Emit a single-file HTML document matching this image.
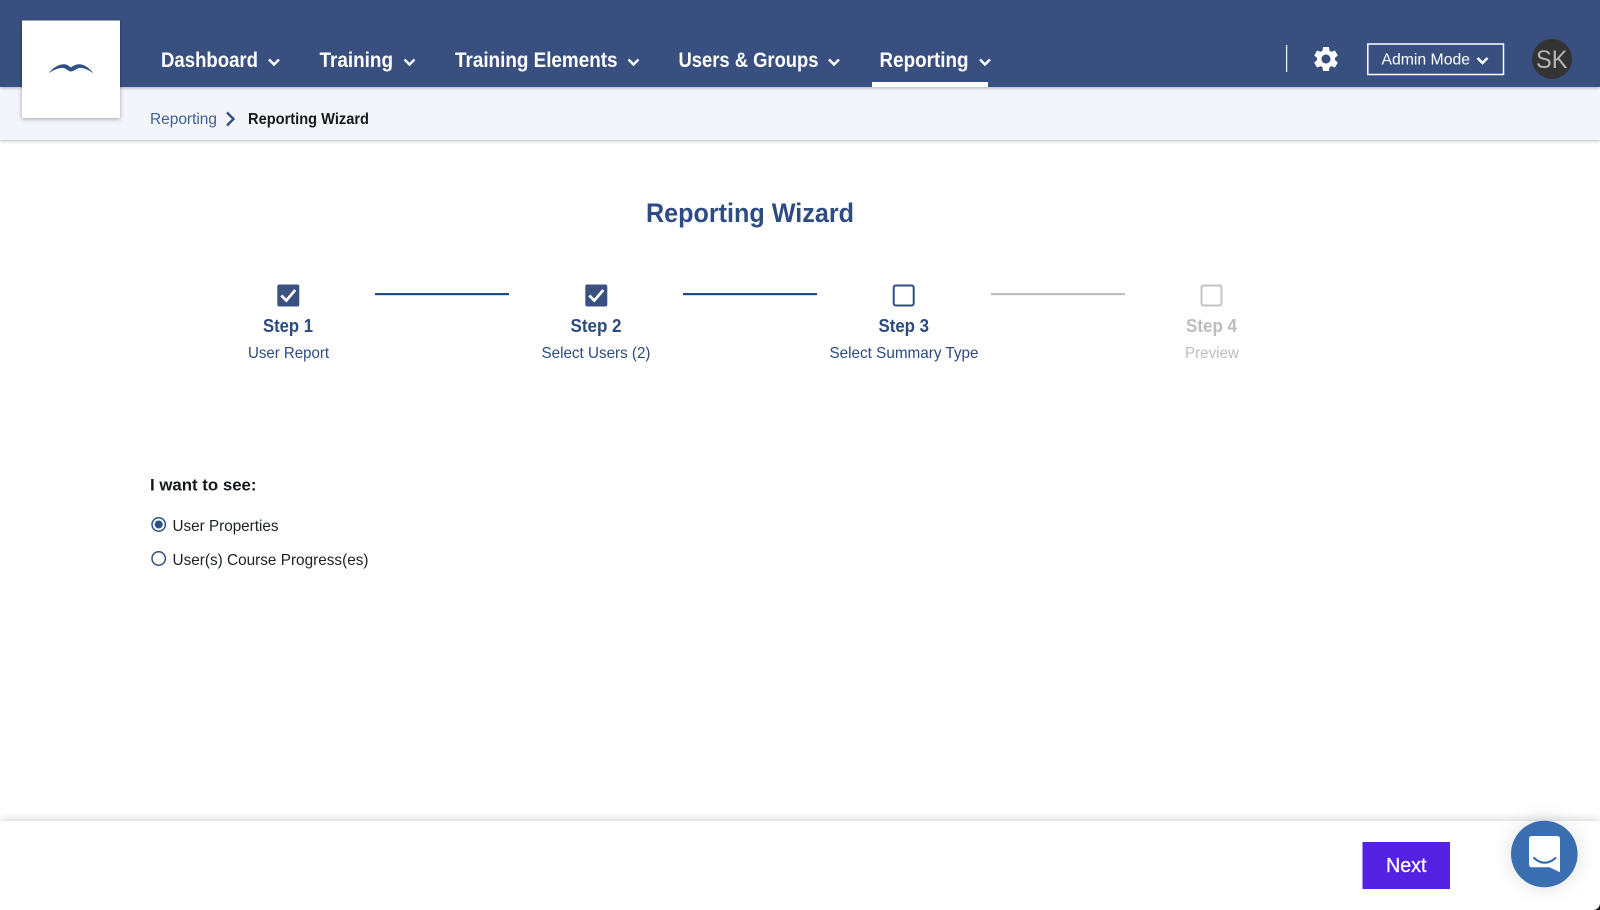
<!DOCTYPE html>
<html><head><meta charset="utf-8"><title>Reporting Wizard</title>
<style>
html,body{margin:0;padding:0;background:#fff;width:1600px;height:910px;overflow:hidden}
svg{display:block;position:absolute;left:0;top:0}
text{font-family:"Liberation Sans",sans-serif}
.n{font-size:21px;font-weight:bold;fill:#fff}
.s{font-size:18px;font-weight:bold;fill:#2b4a80;text-anchor:start}
.u{font-size:16px;fill:#2b4a80}
.g{fill:#bdbdbd}
.k{font-size:16px;fill:#1c2026}
</style></head><body>
<svg width="1600" height="910" viewBox="0 0 1600 910" xmlns="http://www.w3.org/2000/svg">
<defs>
<filter id="sh" x="-10%" y="-30%" width="120%" height="170%"><feDropShadow dx="0" dy="1" stdDeviation="1.5" flood-color="#000" flood-opacity=".28"/></filter>
<filter id="sl" x="-20%" y="-20%" width="140%" height="140%"><feDropShadow dx="0" dy="1" stdDeviation="2" flood-color="#000" flood-opacity=".35"/></filter>
<filter id="sf" x="-5%" y="-30%" width="110%" height="150%"><feDropShadow dx="0" dy="-2" stdDeviation="4" flood-color="#000" flood-opacity=".14"/></filter>
<filter id="sc" x="-40%" y="-40%" width="180%" height="180%"><feDropShadow dx="0" dy="0" stdDeviation="10" flood-color="#000" flood-opacity=".12"/></filter>
</defs>
<rect width="1600" height="910" fill="#fff"/>
<rect x="0" y="87" width="1600" height="53" fill="#f3f5fa" filter="url(#sh)"/>
<rect x="0" y="0" width="1600" height="87" fill="#395080" filter="url(#sh)"/>
<rect x="22" y="20.5" width="98" height="97.5" fill="#fff" filter="url(#sl)"/>
<path d="M48.5 73.5C53 67.5 59 64 64.5 64.3C67.5 64.6 69.5 66.5 71 67.5C72.5 66.5 75 64.5 78.5 64.3C84 64 89.5 68 93.5 73.5C88 69.5 83 67.5 79.5 68C76 68.5 73.5 71.5 71 71.5C68.5 71.5 66.5 68.5 63.5 68C59.5 67.5 54 69.5 48.5 73.5Z" fill="#2f4f88"/>

<text class="n" x="161" y="67" textLength="97" lengthAdjust="spacingAndGlyphs">Dashboard</text>
<text class="n" x="319.5" y="67" textLength="73.5" lengthAdjust="spacingAndGlyphs">Training</text>
<text class="n" x="455" y="67" textLength="162.5" lengthAdjust="spacingAndGlyphs">Training Elements</text>
<text class="n" x="678.5" y="67" textLength="140" lengthAdjust="spacingAndGlyphs">Users &amp; Groups</text>
<text class="n" x="879.5" y="67" textLength="89" lengthAdjust="spacingAndGlyphs">Reporting</text>
<g fill="none" stroke="#fff" stroke-width="2.4">
<path d="M269 59.5l5 5 5-5"/><path d="M404.5 59.5l5 5 5-5"/><path d="M628.5 59.5l5 5 5-5"/><path d="M829 59.5l5 5 5-5"/><path d="M980 59.5l5 5 5-5"/>
</g>
<rect x="872" y="82" width="116" height="5" fill="#fff"/>

<rect x="1286" y="45" width="1.2" height="27" fill="#fff"/>
<svg x="1311" y="44" width="30" height="30" viewBox="0 0 24 24"><path fill="#fff" d="M19.14 12.94c.04-.3.06-.61.06-.94 0-.32-.02-.64-.07-.94l2.03-1.58a.49.49 0 0 0 .12-.61l-1.92-3.32a.488.488 0 0 0-.59-.22l-2.39.96c-.5-.38-1.03-.7-1.62-.94l-.36-2.54a.484.484 0 0 0-.48-.41h-3.84c-.24 0-.43.17-.47.41l-.36 2.54c-.59.24-1.13.57-1.62.94l-2.39-.96c-.22-.08-.47 0-.59.22L2.74 8.87c-.12.21-.08.47.12.61l2.03 1.58c-.05.3-.09.63-.09.94s.02.64.07.94l-2.03 1.58a.49.49 0 0 0-.12.61l1.92 3.32c.12.22.37.29.59.22l2.39-.96c.5.38 1.03.7 1.62.94l.36 2.54c.05.24.24.41.48.41h3.84c.24 0 .44-.17.47-.41l.36-2.54c.59-.24 1.13-.56 1.62-.94l2.39.96c.22.08.47 0 .59-.22l1.92-3.32c.12-.22.07-.47-.12-.61l-2.01-1.58zM12 15.6c-1.98 0-3.6-1.62-3.6-3.6s1.62-3.6 3.6-3.6 3.6 1.62 3.6 3.6-1.62 3.6-3.6 3.6z"/></svg>
<rect x="1367.8" y="44" width="135.7" height="30.5" fill="none" stroke="#fff" stroke-width="1.5"/>
<text x="1381.5" y="64.5" font-size="16" fill="#fff" textLength="88.5" lengthAdjust="spacingAndGlyphs">Admin Mode</text>
<path d="M1477.5 58l5 5 5-5" fill="none" stroke="#fff" stroke-width="2.5"/>
<circle cx="1552" cy="59" r="20" fill="#333333"/>
<text x="1536" y="68" font-size="25" fill="#b5b5b5" textLength="31.5" lengthAdjust="spacingAndGlyphs">SK</text>

<text x="150" y="124" font-size="15.5" fill="#3f5f96" textLength="67" lengthAdjust="spacingAndGlyphs">Reporting</text>
<path d="M227 112.5l6.5 6.5-6.5 6.5" fill="none" stroke="#2f4f85" stroke-width="2.4"/>
<text x="248" y="124" font-size="15.5" font-weight="bold" fill="#15181d" textLength="121" lengthAdjust="spacingAndGlyphs">Reporting Wizard</text>

<text x="646" y="222" font-size="27" font-weight="bold" fill="#2d4c84" textLength="208" lengthAdjust="spacingAndGlyphs">Reporting Wizard</text>

<rect x="375" y="293" width="134" height="2.2" fill="#1f4a8a"/>
<rect x="683" y="293" width="134" height="2.2" fill="#1f4a8a"/>
<rect x="991" y="293" width="134" height="2.2" fill="#bdbdbd"/>

<rect x="277.3" y="284.5" width="22" height="22" rx="2" fill="#3a5181"/>
<path d="M281.3 295.5l5 5 9-10.5" fill="none" stroke="#fff" stroke-width="2.7"/>
<rect x="585.3" y="284.5" width="22" height="22" rx="2" fill="#3a5181"/>
<path d="M589.3 295.5l5 5 9-10.5" fill="none" stroke="#fff" stroke-width="2.7"/>
<rect x="893.7" y="285.5" width="20" height="20" rx="2" fill="none" stroke="#2f4f85" stroke-width="2"/>
<rect x="1201.5" y="285.5" width="20" height="20" rx="2" fill="none" stroke="#c4c4c4" stroke-width="2"/>

<text class="s" x="263" y="332" textLength="50" lengthAdjust="spacingAndGlyphs">Step 1</text>
<text class="s" x="570.5" y="332" textLength="51" lengthAdjust="spacingAndGlyphs">Step 2</text>
<text class="s" x="878.5" y="332" textLength="50.5" lengthAdjust="spacingAndGlyphs">Step 3</text>
<text class="s g" x="1186" y="332" textLength="51" lengthAdjust="spacingAndGlyphs" style="fill:#bdbdbd">Step 4</text>

<text class="u" x="248" y="358.2" textLength="81" lengthAdjust="spacingAndGlyphs">User Report</text>
<text class="u" x="541.5" y="358.2" textLength="109" lengthAdjust="spacingAndGlyphs">Select Users (2)</text>
<text class="u" x="829.5" y="358.2" textLength="149" lengthAdjust="spacingAndGlyphs">Select Summary Type</text>
<text class="u" x="1185" y="358.2" textLength="54" lengthAdjust="spacingAndGlyphs" style="fill:#bdbdbd">Preview</text>

<text x="150" y="490.5" font-size="17" font-weight="bold" fill="#15181d" textLength="106.5" lengthAdjust="spacingAndGlyphs">I want to see:</text>
<circle cx="158.7" cy="524.5" r="6.7" fill="#fff" stroke="#2f4f85" stroke-width="1.5"/>
<circle cx="158.7" cy="524.5" r="4" fill="#2f4f85"/>
<text class="k" x="172.5" y="531" textLength="106" lengthAdjust="spacingAndGlyphs">User Properties</text>
<circle cx="158.7" cy="558.5" r="6.7" fill="#fff" stroke="#2f4f85" stroke-width="1.5"/>
<text class="k" x="172.5" y="565" textLength="196" lengthAdjust="spacingAndGlyphs">User(s) Course Progress(es)</text>

<rect x="0" y="821" width="1600" height="89" fill="#fff" filter="url(#sf)"/>
<rect x="1362.5" y="842" width="87.5" height="47" fill="#5420e2"/>
<text x="1386" y="872" font-size="20.5" fill="#fff" textLength="40.5" lengthAdjust="spacingAndGlyphs" stroke="#fff" stroke-width=".3">Next</text>

<circle cx="1544.3" cy="854" r="33.3" fill="#3a6eb1" filter="url(#sc)"/>
<path d="M1532 836H1557Q1560 836 1560 839V872.3L1549.5 867.3H1532Q1529 867.3 1529 864.3V839Q1529 836 1532 836Z" fill="#fff"/>
<path d="M1534 858Q1544.5 867.5 1555.5 858" fill="none" stroke="#2e66ae" stroke-width="2" stroke-linecap="round"/>
<path d="M1600 904V910H1594Q1599 909 1600 904Z" fill="#111"/>
</svg>
</body></html>
